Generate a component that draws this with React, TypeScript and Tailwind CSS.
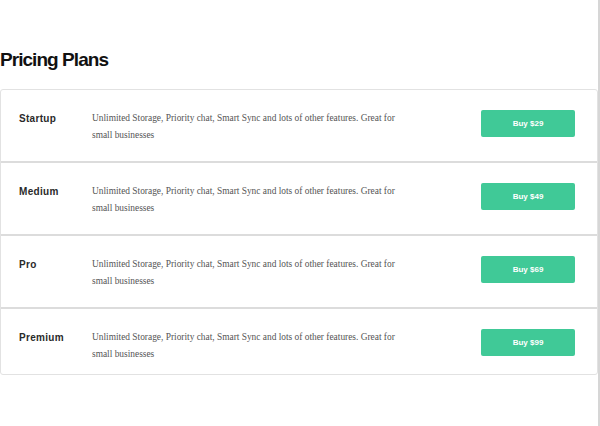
const plans = [
  { name: 'Startup', price: 29 },
  { name: 'Medium', price: 49 },
  { name: 'Pro', price: 69 },
  { name: 'Premium', price: 99 },
]

export default function App() {
  return (
    <div className="min-h-screen w-[600px] bg-white border-r-2 border-[#d6d6d6] font-['Liberation_Sans',Arial,sans-serif]">
      <div className="w-[598px] pt-[47px]">
        <h1 className="text-[19px] leading-[26px] font-bold tracking-[-0.95px] text-[#111]">Pricing Plans</h1>

        <div className="mt-[16px] border border-[#e2e2e2] rounded-[3px]">
          {plans.map((plan, i) => {
            const last = i === plans.length - 1
            return (
              <div
                key={plan.name}
                className={`flex items-start pl-[18px] pr-[22px] pt-[20px] ${last ? 'pb-[11px]' : 'pb-[17px] border-b-2 border-[#dcdcdc]'}`}
              >
                <div className="w-[73px] shrink-0 pt-[3px] text-[10px] leading-[12px] font-bold tracking-[0.3px] text-[#2a2a2a]">
                  {plan.name}
                </div>
                <p className="w-[320px] text-[9.4px] leading-[17px] text-[#555] font-['Liberation_Serif','Times_New_Roman',serif]">
                  Unlimited Storage, Priority chat, Smart Sync and lots of other features. Great for small businesses
                </p>
                <div className="ml-auto flex">
                  <button className="w-[94px] h-[27px] rounded-[2px] bg-[#40c997] text-white text-[8px] leading-none font-bold">
                    Buy ${plan.price}
                  </button>
                </div>
              </div>
            )
          })}
        </div>
      </div>
    </div>
  )
}
